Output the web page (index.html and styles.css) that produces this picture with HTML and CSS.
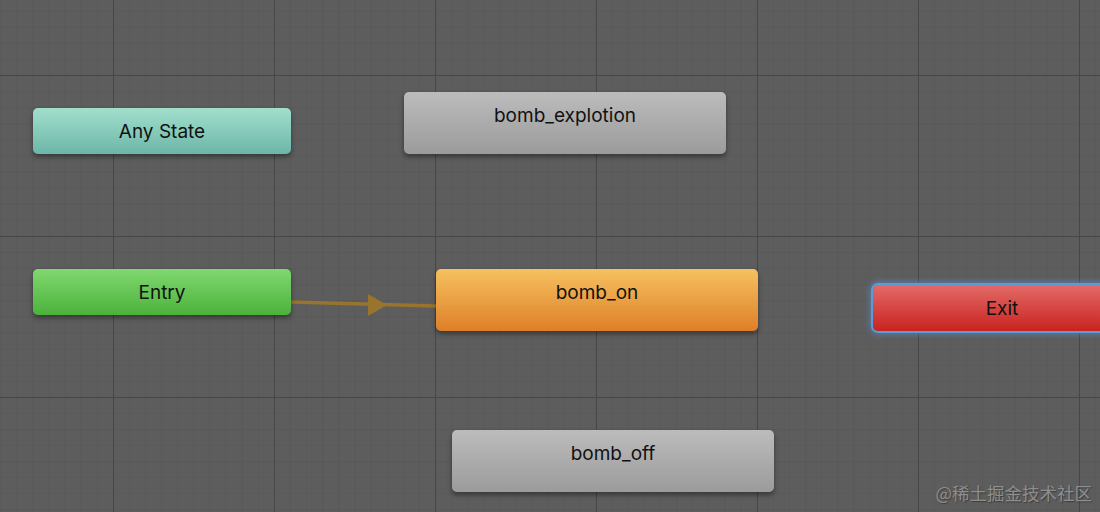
FILE: index.html
```html
<!DOCTYPE html>
<html lang="en">
<head>
  <meta charset="UTF-8" />
  <title>Animator</title>
  <link rel="stylesheet" href="styles.css">
</head>
<body>
  <div class="graph">
    <!-- transicion Entry -> bomb_on -->
    <svg class="links" width="1100" height="512" viewBox="0 0 1100 512">
      <line x1="291" y1="302" x2="436" y2="306" stroke="#98742c" stroke-width="3.5" />
      <polygon points="368,294 387,305 368,316" fill="#98742c" />
    </svg>

    <div class="node any-state" style="left:33px; top:108px;">Any State</div>
    <div class="node entry" style="left:33px; top:269px;">Entry</div>
    <div class="node state big" style="left:404px; top:92px;">bomb_explotion</div>
    <div class="node state big orange" style="left:436px; top:269px;">bomb_on</div>
    <div class="node state big" style="left:452px; top:430px;">bomb_off</div>
    <div class="node exit" style="left:873px; top:285px;">Exit</div>

    <div class="marca">@稀土掘金技术社区</div>
  </div>
</body>
</html>
```

FILE: styles.css
```css
body {
  margin: 0;
  overflow: hidden;
  font-family: Inter, "Noto Sans", sans-serif;
}

.graph {
  position: relative;
  width: 1100px;
  height: 512px;
  overflow: hidden;
  background-color: #5d5d5d;
  background-image:
    linear-gradient(to right, #474747 0 1px, transparent 1px),
    linear-gradient(to bottom, #474747 0 1px, transparent 1px),
    linear-gradient(to right, rgba(0, 0, 0, 0.04) 0 1px, transparent 1px),
    linear-gradient(to bottom, rgba(0, 0, 0, 0.04) 0 1px, transparent 1px);
  background-size: 161px 161px, 161px 161px, 16.1px 16.1px, 16.1px 16.1px;
  background-position: 113px 75px, 113px 75px, 113px 75px, 113px 75px;
}

.links {
  position: absolute;
  left: 0;
  top: 0;
}

.node {
  position: absolute;
  box-sizing: border-box;
  width: 258px;
  height: 46px;
  padding-top: 13px;
  border-radius: 5px;
  font-size: 19px;
  line-height: 22px;
  text-align: center;
  color: #111;
  box-shadow: 0 3px 5px rgba(0, 0, 0, 0.4);
}

.big {
  width: 322px;
  height: 62px;
}

.any-state {
  background: linear-gradient(to bottom, #a2dfcc, #6cb6a8);
}

.entry {
  background: linear-gradient(to bottom, #80d870, #4cb23b);
}

.state {
  background: linear-gradient(to bottom, #bcbcbc, #9b9b9b);
}

.orange {
  background: linear-gradient(to bottom, #f6c160, #de7f28);
}

.exit {
  background: linear-gradient(to bottom, #e36a68, #c8231f);
  box-shadow: 0 0 0 2px #5d9ad8, 0 0 6px 3px rgba(90, 150, 220, 0.6);
}

.marca {
  position: absolute;
  right: 8px;
  bottom: 7px;
  font-family: "Noto Sans CJK SC", sans-serif;
  font-size: 17.5px;
  color: #8e8e8e;
  text-shadow: 1px 1px 1px rgba(0, 0, 0, 0.35);
}
```
